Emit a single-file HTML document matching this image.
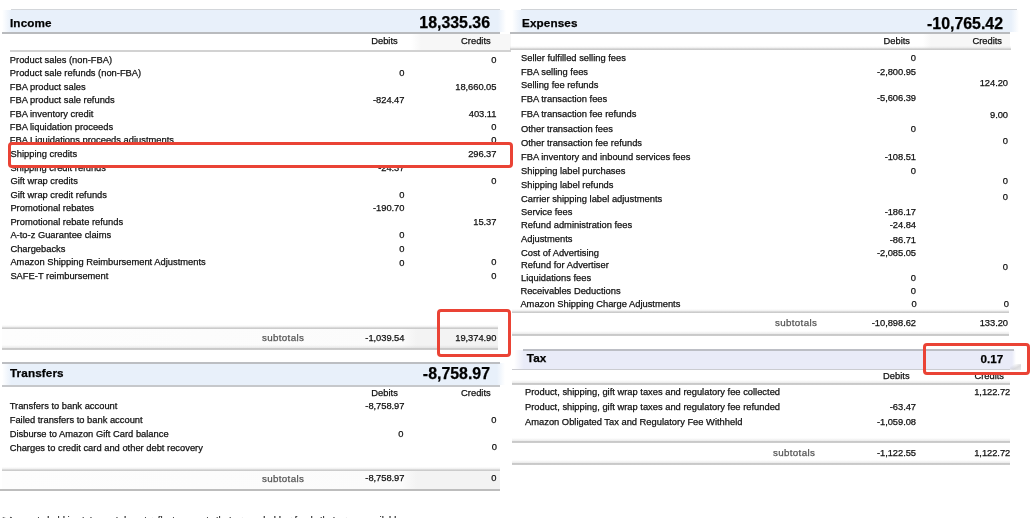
<!DOCTYPE html>
<html><head><meta charset="utf-8"><title>Statement</title><style>
html,body{margin:0;padding:0;background:#fff}
#p{filter:blur(0.35px);position:relative;width:1034px;height:518px;overflow:hidden;background:#fff;font-family:"Liberation Sans",sans-serif;color:#111}
.t{-webkit-text-stroke:0.25px currentColor;position:absolute;white-space:nowrap;font-size:9.35px;line-height:12px;height:12px}
.r{text-align:right}
.hb{font-size:11.7px;letter-spacing:0.12px;font-weight:bold;line-height:16px;height:16px;color:#000}
.hv{font-size:15.9px;font-weight:bold;line-height:22px;height:22px;color:#000}
.hv2{font-size:11.7px;font-weight:bold;line-height:16px;height:16px;color:#000}
.st{color:#555;font-size:9.8px;letter-spacing:0.33px}
.n{letter-spacing:-0.05px}
.tband{background:linear-gradient(to right,#fff 0,#e9ebf8 10px,#e9ebf8 calc(100% - 4px),#fff 100%)}
.hband{background:linear-gradient(to right,#fff 0,#e8f0fa 9px,#e8f0fa calc(100% - 8px),#fff 100%)}
.sband{background:linear-gradient(to right,#fdfdfd 0,#fbfbfb 400px,#f3f3f3 415px,#f3f3f3 100%)}
.sln{position:absolute;height:4.5px;background:linear-gradient(to bottom,rgba(200,200,200,0) 0,rgba(200,200,200,.35) 55%,#c9c9c9 70%,#cdcdcd 100%)}
.band{position:absolute}
.ln{position:absolute;height:1.5px}
.rb{position:absolute;box-sizing:border-box;border:3px solid #ea4335;border-radius:4px}
</style></head><body><div id="p">
<div class="band hband" style="left:2px;top:10px;width:504px;height:22px"></div>
<div class="ln" style="left:11px;top:8.5px;width:489px;background:#d3d6da"></div>
<div class="ln" style="left:2px;top:32px;width:498px;background:#b9bbbe"></div>
<div class="band" style="left:411px;top:33.5px;width:100px;height:17px;background:linear-gradient(to right,#fff 0,#f7f7f7 10px)"></div>
<div class="t hb" style="left:10px;top:15px">Income</div>
<div class="t r hv" style="right:544px;top:12px">18,335.36</div>
<div class="t r " style="right:636.3px;top:35.0px;">Debits</div>
<div class="t r " style="right:543.3px;top:35.0px;">Credits</div>
<div class="ln" style="left:10px;top:50px;width:501px;background:#d2d2d2"></div>
<div class="t " style="left:9.8px;top:54.0px;">Product sales (non-FBA)</div>
<div class="t r  n" style="right:537.6px;top:54.0px;">0</div>
<div class="t " style="left:9.8px;top:67.0px;">Product sale refunds (non-FBA)</div>
<div class="t r  n" style="right:629.6px;top:67.0px;">0</div>
<div class="t " style="left:9.8px;top:81.0px;">FBA product sales</div>
<div class="t r  n" style="right:537.6px;top:81.0px;">18,660.05</div>
<div class="t " style="left:9.8px;top:94.0px;">FBA product sale refunds</div>
<div class="t r  n" style="right:629.6px;top:94.0px;">-824.47</div>
<div class="t " style="left:9.8px;top:108.0px;">FBA inventory credit</div>
<div class="t r  n" style="right:537.6px;top:108.0px;">403.11</div>
<div class="t " style="left:9.8px;top:121.0px;">FBA liquidation proceeds</div>
<div class="t r  n" style="right:537.6px;top:121.0px;">0</div>
<div class="t " style="left:9.8px;top:134.0px;">FBA Liquidations proceeds adjustments</div>
<div class="t r  n" style="right:537.6px;top:134.0px;">0</div>
<div class="t " style="left:10.4px;top:162.0px;">Shipping credit refunds</div>
<div class="t r  n" style="right:629.6px;top:162.0px;">-24.37</div>
<div class="t " style="left:10.4px;top:175.0px;">Gift wrap credits</div>
<div class="t r  n" style="right:537.6px;top:175.0px;">0</div>
<div class="t " style="left:10.4px;top:189.0px;">Gift wrap credit refunds</div>
<div class="t r  n" style="right:629.6px;top:189.0px;">0</div>
<div class="t " style="left:10.4px;top:202.0px;">Promotional rebates</div>
<div class="t r  n" style="right:629.6px;top:202.0px;">-190.70</div>
<div class="t " style="left:10.4px;top:216.0px;">Promotional rebate refunds</div>
<div class="t r  n" style="right:537.6px;top:216.0px;">15.37</div>
<div class="t " style="left:10.4px;top:229.0px;">A-to-z Guarantee claims</div>
<div class="t r  n" style="right:629.6px;top:229.0px;">0</div>
<div class="t " style="left:10.4px;top:243.0px;">Chargebacks</div>
<div class="t r  n" style="right:629.6px;top:243.0px;">0</div>
<div class="t " style="left:10.4px;top:256.0px;">Amazon Shipping Reimbursement Adjustments</div>
<div class="t r  n" style="right:537.6px;top:256.0px;">0</div>
<div class="t " style="left:10.4px;top:270.0px;">SAFE-T reimbursement</div>
<div class="t r  n" style="right:537.6px;top:270.0px;">0</div>
<div class="t r  n" style="right:629.6px;top:257.0px;">0</div>
<div class="rb" style="left:8px;top:142px;width:505px;height:26px;background:#fff"></div>
<div class="t " style="left:10.6px;top:148.0px;">Shipping credits</div>
<div class="t r  n" style="right:537.6px;top:148.0px;">296.37</div>
<div class="band sband" style="left:2px;top:328px;width:496px;height:20px"></div>
<div class="sln" style="left:2px;top:324.5px;width:496px"></div>
<div class="sln" style="left:2px;top:345px;width:496px"></div>
<div class="t st" style="left:262px;top:331.5px;">subtotals</div>
<div class="t r  n" style="right:629.6px;top:331.5px;">-1,039.54</div>
<div class="t r  n" style="right:537.6px;top:331.5px;">19,374.90</div>
<div class="rb" style="left:437px;top:309px;width:74px;height:48px"></div>
<div class="band hband" style="left:2px;top:363px;width:503px;height:22px"></div>
<div class="ln" style="left:2px;top:362px;width:498px;background:#bcbec2"></div>
<div class="ln" style="left:2px;top:385px;width:498px;background:#c6c8cb"></div>
<div class="t hb" style="left:10px;top:365px">Transfers</div>
<div class="t r hv" style="right:544px;top:363px">-8,758.97</div>
<div class="t r " style="right:636.2px;top:387.0px;">Debits</div>
<div class="t r " style="right:543.3px;top:387.0px;">Credits</div>
<div class="t " style="left:9.7px;top:399.5px;">Transfers to bank account</div>
<div class="t r  n" style="right:629.6px;top:399.5px;">-8,758.97</div>
<div class="t " style="left:9.7px;top:413.5px;">Failed transfers to bank account</div>
<div class="t r  n" style="right:537.6px;top:413.5px;">0</div>
<div class="t " style="left:9.7px;top:427.5px;">Disburse to Amazon Gift Card balance</div>
<div class="t " style="left:9.7px;top:441.5px;">Charges to credit card and other debt recovery</div>
<div class="t r  n" style="right:630.5px;top:427.5px;">0</div>
<div class="t r  n" style="right:537px;top:440.5px;">0</div>
<div class="band sband" style="left:2px;top:471px;width:498px;height:18px"></div>
<div class="sln" style="left:2px;top:466.5px;width:498px"></div>
<div class="ln" style="left:0px;top:489px;width:500px;background:#bdbdbd"></div>
<div class="t st" style="left:262px;top:472.5px;">subtotals</div>
<div class="t r  n" style="right:629.6px;top:472.0px;">-8,758.97</div>
<div class="t r  n" style="right:537.6px;top:472.0px;">0</div>
<div class="band hband" style="left:512px;top:10px;width:507px;height:22px"></div>
<div class="ln" style="left:521px;top:8.5px;width:496px;background:#d0d3d7"></div>
<div class="ln" style="left:510px;top:32px;width:500px;background:#b9bbbe"></div>
<div class="band" style="left:923px;top:33.5px;width:87px;height:15px;background:linear-gradient(to right,#fff 0,#f7f7f7 8px)"></div>
<div class="t hb" style="left:522px;top:15px">Expenses</div>
<div class="t r hv" style="right:31px;top:12.7px">-10,765.42</div>
<div class="t r " style="right:124px;top:35.0px;">Debits</div>
<div class="t r " style="right:32px;top:35.0px;">Credits</div>
<div class="sln" style="left:510px;top:45.5px;width:501px"></div>
<div class="t " style="left:521px;top:51.5px;">Seller fulfilled selling fees</div>
<div class="t r  n" style="right:118px;top:51.5px;">0</div>
<div class="t " style="left:521px;top:65.5px;">FBA selling fees</div>
<div class="t r  n" style="right:118px;top:65.5px;">-2,800.95</div>
<div class="t " style="left:521px;top:79.0px;">Selling fee refunds</div>
<div class="t r  n" style="right:26px;top:76.5px;">124.20</div>
<div class="t " style="left:521px;top:93.0px;">FBA transaction fees</div>
<div class="t r  n" style="right:118px;top:91.5px;">-5,606.39</div>
<div class="t " style="left:521px;top:107.5px;">FBA transaction fee refunds</div>
<div class="t r  n" style="right:26px;top:108.5px;">9.00</div>
<div class="t " style="left:521px;top:123.0px;">Other transaction fees</div>
<div class="t r  n" style="right:118px;top:123.0px;">0</div>
<div class="t " style="left:521px;top:137.0px;">Other transaction fee refunds</div>
<div class="t r  n" style="right:26px;top:135.25px;">0</div>
<div class="t " style="left:521px;top:151.0px;">FBA inventory and inbound services fees</div>
<div class="t r  n" style="right:118px;top:151.0px;">-108.51</div>
<div class="t " style="left:521px;top:165.0px;">Shipping label purchases</div>
<div class="t r  n" style="right:118px;top:165.0px;">0</div>
<div class="t " style="left:521px;top:179.0px;">Shipping label refunds</div>
<div class="t r  n" style="right:26px;top:175.25px;">0</div>
<div class="t " style="left:521px;top:193.0px;">Carrier shipping label adjustments</div>
<div class="t r  n" style="right:26px;top:191.25px;">0</div>
<div class="t " style="left:521px;top:205.5px;">Service fees</div>
<div class="t r  n" style="right:118px;top:205.5px;">-186.17</div>
<div class="t " style="left:521px;top:218.5px;">Refund administration fees</div>
<div class="t r  n" style="right:118px;top:218.5px;">-24.84</div>
<div class="t " style="left:521px;top:232.5px;">Adjustments</div>
<div class="t r  n" style="right:118px;top:233.5px;">-86.71</div>
<div class="t " style="left:521px;top:246.5px;">Cost of Advertising</div>
<div class="t r  n" style="right:118px;top:246.5px;">-2,085.05</div>
<div class="t " style="left:521px;top:258.5px;">Refund for Advertiser</div>
<div class="t r  n" style="right:26px;top:260.5px;">0</div>
<div class="t " style="left:521px;top:271.5px;">Liquidations fees</div>
<div class="t r  n" style="right:118px;top:271.5px;">0</div>
<div class="t " style="left:520.4px;top:284.5px;">Receivables Deductions</div>
<div class="t r  n" style="right:118px;top:284.5px;">0</div>
<div class="t " style="left:520.4px;top:297.5px;">Amazon Shipping Charge Adjustments</div>
<div class="t r  n" style="right:117.4px;top:297.5px;">0</div>
<div class="t r  n" style="right:25.2px;top:297.5px;">0</div>
<div class="sln" style="left:512px;top:308.5px;width:497px"></div>
<div class="sln" style="left:512px;top:331px;width:497px"></div>
<div class="t st" style="left:775px;top:316.5px;">subtotals</div>
<div class="t r  n" style="right:118px;top:316.5px;">-10,898.62</div>
<div class="t r  n" style="right:26px;top:316.5px;">133.20</div>
<div class="band tband" style="left:514px;top:350px;width:502px;height:19px"></div>
<div class="ln" style="left:523px;top:349px;width:491px;background:#bcbec5"></div>
<div class="ln" style="left:512px;top:368.5px;width:498px;background:#cbccd1"></div>
<div class="t hb" style="left:526.8px;top:349.5px">Tax</div>
<div class="t r hv2" style="right:30.7px;top:350.5px">0.17</div>
<div class="t r " style="right:124.4px;top:369.5px;">Debits</div>
<div class="t r " style="right:30px;top:369.5px;">Credits</div>
<div class="sln" style="left:512px;top:380px;width:498px"></div>
<div class="band" style="left:1010px;top:364px;width:11px;height:6px;background:linear-gradient(to bottom right,rgba(190,190,195,0) 20%,rgba(190,190,195,.55) 60%,rgba(200,200,205,.35) 100%)"></div>
<div class="rb" style="left:923px;top:343px;width:107px;height:32px"></div>
<div class="t " style="left:525px;top:386.0px;">Product, shipping, gift wrap taxes and regulatory fee collected</div>
<div class="t r  n" style="right:23.8px;top:386.0px;">1,122.72</div>
<div class="t " style="left:525px;top:401.0px;">Product, shipping, gift wrap taxes and regulatory fee refunded</div>
<div class="t r  n" style="right:118px;top:401.0px;">-63.47</div>
<div class="t " style="left:525px;top:415.5px;">Amazon Obligated Tax and Regulatory Fee Withheld</div>
<div class="t r  n" style="right:118px;top:415.5px;">-1,059.08</div>
<div class="sln" style="left:512px;top:438px;width:498px"></div>
<div class="sln" style="left:512px;top:460px;width:498px"></div>
<div class="t st" style="left:773px;top:446.5px;">subtotals</div>
<div class="t r  n" style="right:118px;top:446.5px;">-1,122.55</div>
<div class="t r  n" style="right:23.8px;top:446.5px;">1,122.72</div>
<div class="t " style="left:2px;top:514.0px;color:#333">* Amounts held in statement do not reflect amounts that are on hold or funds that are unavailable.</div>
</div></body></html>
